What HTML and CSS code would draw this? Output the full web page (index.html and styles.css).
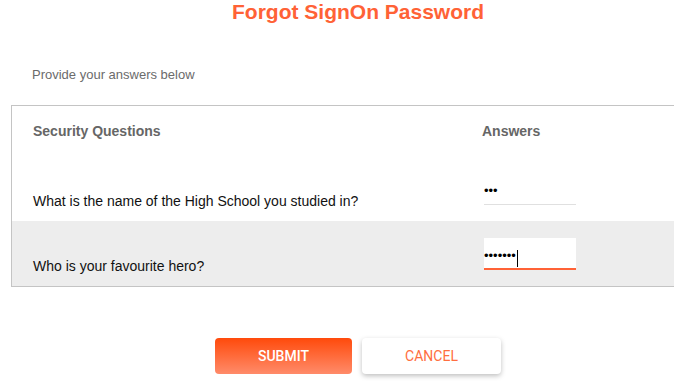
FILE: index.html
```html
<!DOCTYPE html>
<html>
<head>
<meta charset="utf-8">
<link rel="stylesheet" href="styles.css">
</head>
<body>
<div class="page">
  <h1 class="title">Forgot SignOn Password</h1>
  <p class="hint">Provide your answers below</p>
  <div class="qtable">
    <div class="row head">
      <div class="qcol">Security Questions</div>
      <div class="acol">Answers</div>
    </div>
    <div class="row">
      <div class="qcol">What is the name of the High School you studied in?</div>
      <div class="acol"><input class="ans" type="password" value="abc"></div>
    </div>
    <div class="row alt">
      <div class="qcol">Who is your favourite hero?</div>
      <div class="acol"><span class="field"><input class="ans active" type="password" value="abcdefg"><span class="caret"></span></span></div>
    </div>
  </div>
  <div class="actions">
    <button class="btn submit">SUBMIT</button>
    <button class="btn cancel">CANCEL</button>
  </div>
</div>
</body>
</html>
```

FILE: styles.css
```css
html, body {
  margin: 0;
  padding: 0;
  background: #fff;
  overflow: hidden;
}
body {
  font-family: "Liberation Sans", Arial, sans-serif;
  width: 674px;
  height: 383px;
}
.page {
  width: 694px;
  margin-left: 11px;
}
.title {
  margin: 0;
  padding-top: 0;
  text-align: center;
  font-size: 21px;
  line-height: 24px;
  font-weight: bold;
  color: #ff6236;
}
.hint {
  margin: 43px 0 0 21px;
  font-size: 13px;
  line-height: 15px;
  color: #6b6b6b;
}
.qtable {
  margin-top: 23px;
  border: 1px solid #c4c4c4;
}
.row {
  display: flex;
  height: 65px;
  box-sizing: border-box;
}
.row.head {
  height: 50px;
  align-items: flex-start;
  padding-top: 17px;
  font-weight: bold;
  color: #666;
  font-size: 14px;
  line-height: 16px;
}
.row.alt {
  background: #ededed;
}
.qcol {
  width: 451px;
  padding-left: 21px;
  font-size: 14px;
  line-height: 16px;
}
.row:not(.head) {
  align-items: stretch;
  padding-top: 17px;
  padding-bottom: 16px;
}
.row:not(.head) .qcol {
  color: #111;
  display: flex;
  align-items: flex-end;
  margin-bottom: -4px;
}
.head .acol {
  margin-left: -2px;
}
.acol {
  font-size: 14px;
}
.field {
  position: relative;
  display: inline-block;
}
.ans {
  display: block;
  width: 92px;
  height: 32px;
  box-sizing: border-box;
  border: none;
  border-bottom: 1px solid #e0e0e0;
  background: transparent;
  padding: 4px 0 0 0;
  font-family: "Liberation Sans", Arial, sans-serif;
  font-size: 13px;
  color: #000;
  outline: none;
}
.ans.active {
  background: #fff;
  border-bottom: 2px solid #ff6236;
}
.caret {
  position: absolute;
  left: 33px;
  top: 12px;
  width: 1px;
  height: 17px;
  background: #000;
}
.actions {
  display: flex;
  justify-content: center;
  gap: 10px;
  margin-top: 51px;
}
.btn {
  height: 36px;
  border: none;
  border-radius: 4px;
  font-family: Roboto, "Liberation Sans", sans-serif;
  font-size: 14px;
  font-weight: 500;
  padding: 0;
}
.submit {
  width: 137px;
  color: #fff;
  background: linear-gradient(to bottom, #ff4a0b, #ff8b6a);
}
.cancel {
  width: 139px;
  color: #ff6e40;
  background: #fff;
  font-weight: 400;
  box-shadow: 0 2px 5px rgba(0, 0, 0, 0.25);
}
```
